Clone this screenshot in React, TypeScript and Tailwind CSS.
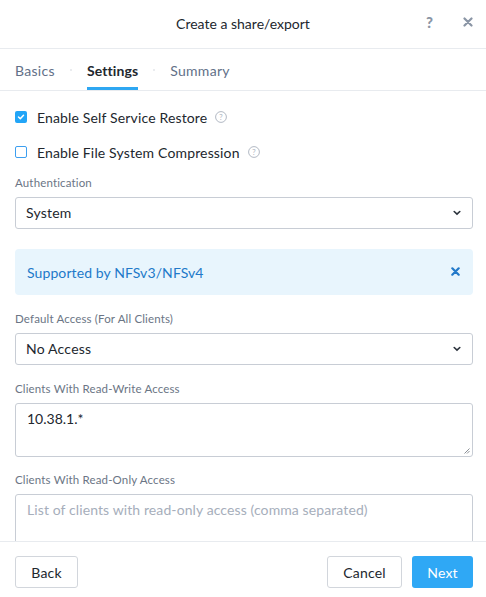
import React from 'react';

const font = { fontFamily: 'Lato, "Noto Sans", sans-serif' };

function HelpCircle() {
    return (
        <svg width="12" height="12" viewBox="0 0 12 12" className="inline-block ml-[8px]">
            <circle cx="6" cy="6" r="5.4" fill="none" stroke="#a9b1bd" strokeWidth="0.9" />
            <text x="6" y="8.6" textAnchor="middle" fontSize="7.5" fill="#a9b1bd" fontFamily="Lato, sans-serif">?</text>
        </svg>
    );
}

function Chevron() {
    return (
        <svg width="8" height="6" viewBox="0 0 8 6">
            <path d="M1.2 1.5 L4 4.2 L6.8 1.5" fill="none" stroke="#2b323c" strokeWidth="1.6" strokeLinecap="round" />
        </svg>
    );
}

function Select({ value }: { value: string }) {
    return (
        <div className="h-[32px] w-full border border-[#c8cdd5] rounded-[3px] flex items-center justify-between pl-[10px] pr-[11px] bg-white">
            <span className="text-[14px] tracking-[0.2px] text-[#22272e] -mt-[2px]">{value}</span>
            <Chevron />
        </div>
    );
}

function Label({ children }: { children: React.ReactNode }) {
    return <div className="text-[11.5px] tracking-[0.15px] text-[#6b7585] leading-[14px] mb-[7px]">{children}</div>;
}

function Dot() {
    return <span className="w-[2px] h-[2px] rounded-full bg-[#e3e6ea]" />;
}

export default function App() {
    return (
        <div style={font} className="w-[486px] h-[597px] bg-white flex flex-col overflow-hidden">
            {/* Header */}
            <div className="h-[49px] shrink-0 border-b border-[#e8ebef] flex items-center relative">
                <div className="flex-1 text-center text-[14px] text-[#22272e] -mt-[2px]">Create a share/export</div>
                <div className="absolute right-[13px] top-0 h-full flex items-center gap-[30px] -mt-[2px]">
                    <span className="text-[15px] font-black text-[#8a95a5]">?</span>
                    <svg width="10" height="10" viewBox="0 0 10 10">
                        <path d="M1.5 1.5 L8.5 8.5 M8.5 1.5 L1.5 8.5" stroke="#8a95a5" strokeWidth="2.2" strokeLinecap="round" />
                    </svg>
                </div>
            </div>

            {/* Tabs */}
            <div className="h-[42px] shrink-0 border-b border-[#e8ebef] flex items-stretch px-[15px] gap-[15px]">
                <div className="flex items-center text-[14px] tracking-[0.3px] text-[#627088] pt-[1px]">Basics</div>
                <div className="flex items-center"><Dot /></div>
                <div className="flex items-center text-[14px] tracking-[0.1px] font-bold text-[#22272e] border-b-[3px] border-[#2ea7f2] pt-[4px]">Settings</div>
                <div className="flex items-center"><Dot /></div>
                <div className="flex items-center text-[14px] tracking-[0.3px] text-[#627088] pt-[1px]">Summary</div>
            </div>

            {/* Body */}
            <div className="flex-1 overflow-hidden pl-[15px] pr-[13px] pt-[20px]">
                <div className="flex items-center h-[12px]">
                    <span className="w-[12px] h-[12px] rounded-[2px] bg-[#22a5f7] flex items-center justify-center">
                        <svg width="8" height="8" viewBox="0 0 8 8">
                            <path d="M1.5 4 L3.3 5.8 L6.5 2.2" fill="none" stroke="white" strokeWidth="1.5" strokeLinecap="round" strokeLinejoin="round" />
                        </svg>
                    </span>
                    <span className="ml-[10px] text-[14px] tracking-[0.15px] text-[#22272e]">Enable Self Service Restore</span>
                    <HelpCircle />
                </div>
                <div className="flex items-center h-[12px] mt-[23px]">
                    <span className="w-[12px] h-[12px] rounded-[2px] border border-[#3d9ff0] bg-white" />
                    <span className="ml-[10px] text-[14px] tracking-[0.15px] text-[#22272e]">Enable File System Compression</span>
                    <HelpCircle />
                </div>

                <div className="mt-[18px]">
                    <Label>Authentication</Label>
                    <Select value="System" />
                </div>

                <div className="mt-[20px] h-[46px] rounded-[4px] bg-[#e8f5fd] flex items-center justify-between pl-[12px] pr-[13px]">
                    <span className="text-[14px] tracking-[0.1px] text-[#2279c9] pt-[1px]">Supported by NFSv3/NFSv4</span>
                    <svg width="9" height="9" viewBox="0 0 9 9" className="-mt-[2px]">
                        <path d="M1.3 1.3 L7.7 7.7 M7.7 1.3 L1.3 7.7" stroke="#2279c9" strokeWidth="2.2" strokeLinecap="round" />
                    </svg>
                </div>

                <div className="mt-[17px]">
                    <Label>Default Access (For All Clients)</Label>
                    <Select value="No Access" />
                </div>

                <div className="mt-[17px]">
                    <Label>Clients With Read-Write Access</Label>
                    <div className="relative h-[54px] border border-[#c8cdd5] rounded-[3px] px-[11px] pt-[4px] leading-[20px]">
                        <span className="text-[14px] text-[#22272e]">10.38.1.*</span>
                        <svg width="6" height="6" viewBox="0 0 6 6" className="absolute right-[2px] bottom-[2px]">
                            <path d="M5.5 0.5 L0.5 5.5 M5.5 3 L3 5.5" stroke="#6d737b" strokeWidth="0.8" />
                        </svg>
                    </div>
                </div>

                <div className="mt-[16px]">
                    <Label>Clients With Read-Only Access</Label>
                    <div className="h-[54px] border border-[#c8cdd5] rounded-[3px] px-[11px] pt-[4px] leading-[20px]">
                        <span className="text-[14px] tracking-[0.1px] text-[#a6aebb]">List of clients with read-only access (comma separated)</span>
                    </div>
                </div>
            </div>

            {/* Footer */}
            <div className="h-[56px] shrink-0 border-t border-[#e8ebef] flex items-start pt-[14px] pl-[15px] pr-[13px]">
                <button className="h-[32px] w-[63px] border border-[#d2d6dc] rounded-[3px] text-[14px] tracking-[0.2px] text-[#22272e] bg-white">Back</button>
                <div className="flex-1" />
                <button className="h-[32px] w-[75px] border border-[#d2d6dc] rounded-[3px] text-[14px] tracking-[0.2px] text-[#22272e] bg-white">Cancel</button>
                <button className="h-[32px] w-[61px] ml-[10px] rounded-[3px] text-[14px] tracking-[0.2px] text-white bg-[#2fa8f5]">Next</button>
            </div>
        </div>
    );
}
